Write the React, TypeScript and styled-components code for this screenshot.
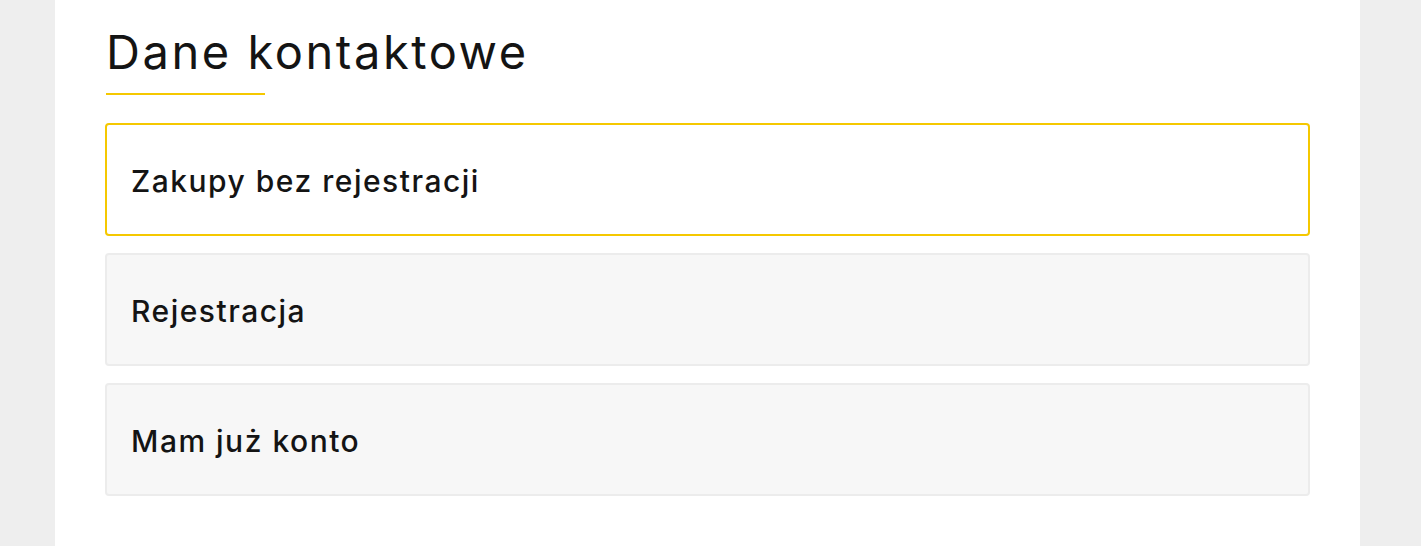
import styled, { createGlobalStyle } from "styled-components";

const GlobalStyle = createGlobalStyle`
  html, body {
    margin: 0;
    padding: 0;
    background: #eeeeee;
    font-family: Inter, "Open Sans", sans-serif;
    color: #141414;
  }
`;

const options = [
  { id: "guest", label: "Zakupy bez rejestracji" },
  { id: "register", label: "Rejestracja" },
  { id: "login", label: "Mam już konto" },
];

const App = () => {
  const active = "guest";

  return (
    <>
      <GlobalStyle />
      <S_Page>
        <S_Panel>
          <S_Title>Dane kontaktowe</S_Title>
          <S_OptionList>
            {options.map((option) => (
              <S_Option key={option.id} $active={option.id === active}>
                {option.label}
              </S_Option>
            ))}
          </S_OptionList>
        </S_Panel>
      </S_Page>
    </>
  );
};

export default App;

const S_Page = styled.div`
  display: flex;
  height: 546px;
  padding-left: 55px;
  overflow: hidden;
`;

const S_Panel = styled.div`
  width: 1305px;
  background: #ffffff;
  padding: 28px 50px 0;
  box-sizing: border-box;
`;

const S_Title = styled.h2`
  position: relative;
  margin: 0 0 28px 1px;
  padding-bottom: 19px;
  font-size: 47px;
  line-height: 48px;
  font-weight: 400;
  letter-spacing: 2.55px;
  color: #141414;

  &::after {
    content: "";
    position: absolute;
    left: 0;
    bottom: 0;
    width: 159px;
    height: 2px;
    background: #f5c800;
  }
`;

const S_OptionList = styled.ul`
  list-style: none;
  margin: 0;
  padding: 0;
  display: flex;
  flex-direction: column;
  gap: 17px;
`;

const S_Option = styled.li<{ $active: boolean }>`
  display: flex;
  align-items: center;
  height: 113px;
  box-sizing: border-box;
  padding: 3px 0 0 24px;
  border: 2px solid ${({ $active }) => ($active ? "#f5c800" : "#ececec")};
  border-radius: 4px;
  background: ${({ $active }) => ($active ? "#ffffff" : "#f7f7f7")};
  font-size: 30px;
  font-weight: 500;
  letter-spacing: 1.5px;
  color: #141414;
  cursor: pointer;
`;
